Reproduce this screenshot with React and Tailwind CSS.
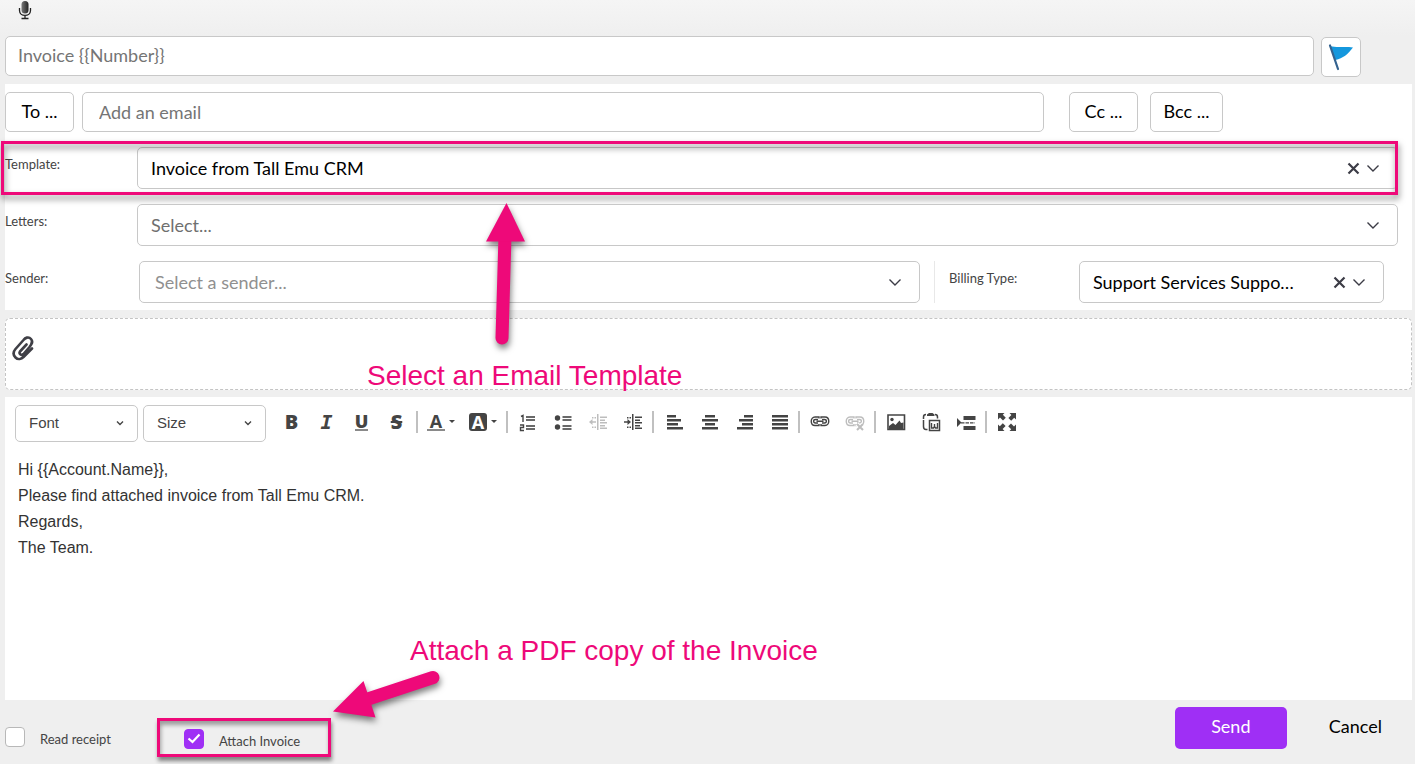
import { useState } from 'react';
import clsx from 'clsx';

const FIELD = 'rounded-[5px] border border-[#c8c8c8] bg-white';
const BODY_LINES = [
  'Hi {{Account.Name}},',
  'Please find attached invoice from Tall Emu CRM.',
  'Regards,',
  'The Team.',
];

export default function App() {
  const [template, setTemplate] = useState('Invoice from Tall Emu CRM');
  const [billing, setBilling] = useState('Support Services Support Plan');

  return (
    <main className="relative min-h-screen overflow-hidden bg-[#efefef] pl-[5px] pr-[3px] font-[Lato,sans-serif] text-lg text-black">
      {/* Dictation */}
      <div className="-ml-[5px] -mr-[3px] h-9 bg-linear-to-b from-[#f5f5f5] to-[#efefef] pl-4">
        <button type="button" aria-label="Dictate" className="block">
          <MicIcon />
        </button>
      </div>

      {/* Subject */}
      <div className="flex items-start gap-[7px] pr-[51px]">
        <input
          aria-label="Subject"
          defaultValue="Invoice {{Number}}"
          className={clsx(FIELD, 'h-10 min-w-0 flex-1 px-3 pb-[2px] text-[#757575]')}
        />
        <button type="button" aria-label="Flag" className={clsx(FIELD, 'mt-px flex size-10 items-center justify-center')}>
          <FlagIcon />
        </button>
      </div>

      <section className="mt-[7px] flex flex-col gap-[15px] bg-white pt-2 pb-[7px]">
        <div className="flex pr-[189px]">
          <button type="button" className={clsx(FIELD, 'h-10 w-[69px] pb-[2px]')}>To ...</button>
          <input
            aria-label="To"
            placeholder="Add an email"
            className={clsx(FIELD, 'ml-2 h-10 min-w-0 flex-1 px-4 placeholder:text-[#757575]')}
          />
          <button type="button" className={clsx(FIELD, 'ml-[25px] h-10 w-[69px] pb-[2px]')}>Cc ...</button>
          <button type="button" className={clsx(FIELD, 'ml-3 h-10 w-[73px] pb-[2px]')}>Bcc ...</button>
        </div>

        <div className="relative flex pr-[14px]">
          <FieldLabel htmlFor="template">Template:</FieldLabel>
          <SelectField id="template" value={template} onChange={setTemplate} placeholder="Select..." options={['Invoice from Tall Emu CRM']} clearable />
          <div className="pointer-events-none absolute -inset-y-[6px] -left-1 right-[14px] border-3 border-[#ee0979] drop-shadow-[1px_4px_3px_rgba(0,0,0,0.5)]" />
        </div>

        <div className="flex pr-[14px]">
          <FieldLabel htmlFor="letters">Letters:</FieldLabel>
          <SelectField id="letters" placeholder="Select..." options={[]} />
        </div>

        <div className="flex pr-7">
          <FieldLabel htmlFor="sender">Sender:</FieldLabel>
          <SelectField id="sender" placeholder="Select a sender..." options={[]} className="ml-[2px] pl-[2px] text-[#909090]" />
          <div className="ml-[14px] flex border-l border-[#e8e8e8] pl-[14px]">
            <FieldLabel htmlFor="billing" className="w-[130px]">Billing Type:</FieldLabel>
            <SelectField
              id="billing"
              value={billing}
              onChange={setBilling}
              placeholder="Select..."
              options={['Support Services Support Plan']}
              className="w-[305px] flex-none"
              clearable
            />
          </div>
        </div>
      </section>

      {/* Attachments */}
      <section className="mt-2 h-[72px] rounded-[5px] border border-dashed border-[#c4c4c4] bg-white pt-4 pl-[6px]">
        <button type="button" aria-label="Attach a file" className="block">
          <ClipIcon />
        </button>
      </section>

      {/* Message */}
      <section className="mt-[7px] min-h-[303px] bg-white font-['Liberation_Sans',Arial,sans-serif]">
        <Toolbar />
        <div
          role="textbox"
          aria-label="Message"
          contentEditable
          suppressContentEditableWarning
          className="mt-[15px] px-[13px] text-base leading-[26px] text-[#333] outline-none"
        >
          {BODY_LINES.map((line) => <p key={line}>{line}</p>)}
        </div>
      </section>

      <footer className="flex items-start pt-[7px] pr-[26px]">
        <div className="mt-5">
          <CheckField id="receipt" label="Read receipt" />
        </div>
        <div className="mt-[11px] ml-[46px] border-3 border-[#ee0979] pt-2 pr-7 pb-[5px] pl-6 shadow-[1px_4px_4px_rgba(0,0,0,0.45),inset_1px_4px_4px_rgba(0,0,0,0.35)]">
          <CheckField id="attach" label="Attach Invoice" defaultChecked />
        </div>
        <button type="button" className="ml-auto h-[42px] w-28 rounded-[5px] bg-[#9f2ff5] pb-1 text-white">Send</button>
        <button type="button" className="ml-[38px] h-[42px] px-1 pb-1">Cancel</button>
      </footer>

      {/* Callouts drawn over the form */}
      <svg className="pointer-events-none absolute top-0 left-0 drop-shadow-[1px_4px_3px_rgba(0,0,0,0.5)]" width="840" height="764" fill="#ee0979" stroke="#ee0979">
        <path d="M505 236L502 338" strokeWidth="13" strokeLinecap="round" />
        <path d="M506.5 203L525 241.500L486 241.500Z" stroke="none" />
        <path d="M368 699L433 677.500" strokeWidth="13" strokeLinecap="round" />
        <path d="M333 711.500L363.500 681L375.500 717.500Z" stroke="none" />
      </svg>
      <Callout className="top-[360px] left-[367px]">Select an Email Template</Callout>
      <Callout className="top-[635px] left-[410px]">Attach a PDF copy of the Invoice</Callout>
    </main>
  );
}

function Callout({ className, children }) {
  return (
    <p className={clsx("pointer-events-none absolute font-['Liberation_Sans',Arial,sans-serif] text-[28px] leading-8 whitespace-nowrap text-[#ee0979]", className)}>
      {children}
    </p>
  );
}

function FieldLabel({ htmlFor, className = 'w-[132px]', children }) {
  return (
    <label htmlFor={htmlFor} className={clsx('shrink-0 pt-2 text-[13px] leading-[18px] text-[#444]', className)}>
      {children}
    </label>
  );
}

function SelectField({ id, value = '', onChange = () => {}, placeholder, options, className, clearable }) {
  return (
    <div className={clsx(FIELD, 'relative flex h-[42px] min-w-0 flex-1 items-center', value ? 'text-black' : 'text-[#6f6f6f]', className)}>
      <select
        id={id}
        value={value}
        onChange={(e) => onChange(e.target.value)}
        className={clsx('h-full w-full appearance-none truncate bg-transparent pl-[13px] outline-none', clearable ? 'pr-[86px]' : 'pr-10')}
      >
        <option value="">{placeholder}</option>
        {options.map((o) => <option key={o}>{o}</option>)}
      </select>
      {clearable && (
        <button type="button" aria-label="Clear" onClick={() => onChange('')} className="absolute right-9 text-[#3c3c46]">
          <svg width="15" height="15" viewBox="0 0 15 15" fill="none" stroke="currentColor" strokeWidth="2.200">
            <path d="M2.500 2.500L12.500 12.500M12.500 2.500L2.500 12.500" />
          </svg>
        </button>
      )}
      <svg className="pointer-events-none absolute right-[17px] text-[#3c3c46]" width="14" height="14" viewBox="0 0 14 14" fill="none" stroke="currentColor" strokeWidth="1.400">
        <path d="M1.500 4.500L7 10L12.500 4.500" />
      </svg>
    </div>
  );
}

function CheckField({ id, label, defaultChecked }) {
  return (
    <div className="flex h-5 items-center gap-[15px]">
      <span className="relative flex size-5">
        <input
          id={id}
          type="checkbox"
          defaultChecked={defaultChecked}
          className="peer size-5 appearance-none rounded-[4px] border border-[#b8b8b8] bg-white checked:border-[#9f2ff5] checked:bg-[#9f2ff5]"
        />
        <svg className="pointer-events-none absolute inset-0 hidden peer-checked:block" width="20" height="20" fill="none" stroke="#fff" strokeWidth="2.200">
          <path d="M4.500 9.500L8.500 13L15.500 5.500" />
        </svg>
      </span>
      <label htmlFor={id} className="pt-1 text-[13px] leading-[18px] text-[#444]">{label}</label>
    </div>
  );
}

/* ---------- editor toolbar ---------- */

function Toolbar() {
  return (
    <div className="flex items-start pt-2 pl-[10px] text-[#444]">
      <ToolSelect label="Font" />
      <ToolSelect label="Size" className="ml-[5px]" />
      <div className="ml-2 flex items-center pt-px font-['Open_Sans',sans-serif]">
        <Tool label="Bold"><span className="text-xl font-extrabold">B</span></Tool>
        <Tool label="Italic"><span className="font-['DejaVu_Sans_Mono'] text-xl font-bold italic">I</span></Tool>
        <Tool label="Underline">
          <span className="border-b-2 border-[#8a8a8a] text-lg leading-4 font-extrabold">U</span>
        </Tool>
        <Tool label="Strikethrough"><span className="text-xl font-extrabold line-through decoration-2">S</span></Tool>
        <Divider />
        <Tool label="Text color" wide>
          <span className="w-[18px] border-b-2 border-[#8a8a8a] text-center text-lg leading-4 font-bold">A</span>
          <Caret />
        </Tool>
        <Tool label="Highlight color" wide>
          <span className="w-[18px] rounded-[3px] bg-[#444] text-center text-lg leading-[18px] font-bold text-white">A</span>
          <Caret />
        </Tool>
        <Divider />
        <Tool label="Numbered list">
          <Glyph>
            <path d="M2 3.500L4 2.500V9M1 12H4.500V14.500H1.500V17.500H5" fill="none" stroke="currentColor" strokeWidth="1.400" />
            <path d="M7 3h9v2H7zM7 6h9v2H7zM7 12h9v2H7zM7 15h9v2H7z" opacity=".8" />
          </Glyph>
        </Tool>
        <Tool label="Bulleted list">
          <Glyph>
            <circle cx="3.500" cy="5" r="2.700" />
            <circle cx="3.500" cy="14" r="2.700" />
            <path d="M8.500 3h9v2h-9zM8.500 6h9v2h-9zM8.500 12h9v2h-9zM8.500 15h9v2h-9z" opacity=".8" />
          </Glyph>
        </Tool>
        <Tool label="Decrease indent" disabled>
          <Glyph><IndentLines /><path d="M0 9l3.500-3v2.300H7v1.400H3.500V12z" /></Glyph>
        </Tool>
        <Tool label="Increase indent">
          <Glyph><IndentLines /><path d="M7 9L3.500 6v2.300H0v1.400h3.500V12z" /></Glyph>
        </Tool>
        <Divider />
        <Tool label="Align left"><Glyph><path d="M2 2h9v2.500H2zM2 6h14v2.500H2zM2 10h11v2.500H2zM2 14h16v2.500H2z" /></Glyph></Tool>
        <Tool label="Align center"><Glyph><path d="M5 2h10v2.500H5zM2 6h16v2.500H2zM5 10h10v2.500H5zM2 14h16v2.500H2z" /></Glyph></Tool>
        <Tool label="Align right"><Glyph><path d="M9 2h9v2.500H9zM4 6h14v2.500H4zM7 10h11v2.500H7zM2 14h16v2.500H2z" /></Glyph></Tool>
        <Tool label="Justify"><Glyph><path d="M2 2h16v2.500H2zM2 6h16v2.500H2zM2 10h16v2.500H2zM2 14h16v2.500H2z" /></Glyph></Tool>
        <Divider />
        <Tool label="Link"><Glyph><ChainLinks /></Glyph></Tool>
        <Tool label="Remove link" disabled>
          <Glyph><ChainLinks /><path d="M11 11l6 6M17 11l-6 6" stroke="#fff" strokeWidth="4" /><path d="M11 11l6 6M17 11l-6 6" stroke="currentColor" strokeWidth="2" /></Glyph>
        </Tool>
        <Divider />
        <Tool label="Image">
          <Glyph>
            <path d="M1 2H17.500V16.500H1Z" fill="none" stroke="currentColor" strokeWidth="1.600" />
            <circle cx="5" cy="6.500" r="1.700" />
            <path d="M2 16V13L6 10L8.500 12L12.500 7.500L14 10L16.500 9.500V16Z" />
          </Glyph>
        </Tool>
        <Tool label="Paste from Word">
          <Glyph>
            <path d="M4 1.500Q1.500 1.500 1.500 4V6M1.500 7V13.500Q1.500 16.500 4 16.500H5.500M13 1.500Q15.500 1.500 15.500 4V5.500" fill="none" stroke="currentColor" strokeWidth="1.500" />
            <path d="M5 3V1.500L7 0H10.500L12.500 1.500V3Z" />
            <path d="M7.500 7.500H17.500V17.500H7.500Z" fill="none" stroke="currentColor" strokeWidth="1.500" />
            <path d="M9.500 10V15H11.500L12.500 13.500L13.500 15H15.500V10M12.500 11V14" fill="none" stroke="currentColor" strokeWidth="1.400" />
          </Glyph>
        </Tool>
        <Tool label="Page break">
          <Glyph>
            <path d="M0 5L4.500 9.500L0 14ZM6.500 3h12v4H6.500zM6.500 13h12v4H6.500z" />
            <path d="M4 9.800H18" stroke="currentColor" strokeWidth="1.200" strokeDasharray="3.500 1" />
          </Glyph>
        </Tool>
        <Divider />
        <Tool label="Full screen">
          <Glyph>
            {[0, 90, 180, 270].map((angle) => (
              <path key={angle} d="M0 0H6.500L4.800 1.800L7.800 4.800L5 7.600L2 4.600L0 6.500Z" transform={`rotate(${angle} 9 9)`} />
            ))}
          </Glyph>
        </Tool>
      </div>
    </div>
  );
}

function ToolSelect({ label, className }) {
  return (
    <div className={clsx(FIELD, 'relative flex h-[37px] w-[123px] items-center', className)}>
      <select aria-label={label} className="h-full w-full appearance-none bg-transparent pb-px pl-[13px] text-[15px] outline-none">
        <option>{label}</option>
      </select>
      <svg className="pointer-events-none absolute right-[13px]" width="8" height="8" fill="none" stroke="currentColor" strokeWidth="1.400">
        <path d="M1 1.500L4 4.500L7 1.500" />
      </svg>
    </div>
  );
}

function Tool({ label, wide, disabled, children }) {
  return (
    <button
      type="button"
      aria-label={label}
      disabled={disabled}
      className={clsx('flex h-8 items-center justify-center', wide ? 'w-[42px] gap-1' : 'w-[35px]', disabled && 'opacity-35')}
    >
      {children}
    </button>
  );
}

function Divider() {
  return <span className="mx-[2px] h-[22px] w-[2px] bg-[#c0c0c0]" />;
}

function Caret() {
  return <svg width="6" height="4" fill="currentColor"><path d="M0 0H6L3 3Z" /></svg>;
}

function Glyph({ children }) {
  return <svg width="18" height="18" viewBox="0 0 18 18" fill="currentColor" className="overflow-visible">{children}</svg>;
}

function IndentLines() {
  return (
    <>
      <path d="M8 1h1.500v16H8zM11 3.500h7v1.500h-7zM11 6.500h5v1.500h-5zM11 9h7v1.500h-7zM11 12h5v1.500h-5zM11 14.500h7v1.500h-7z" />
      <path d="M3 4h1.500v1.500H3zM5.500 4H7v1.500H5.500zM3 13.500h1.500V15H3zM5.500 13.500H7V15H5.500z" />
    </>
  );
}

function ChainLinks() {
  return (
    <g fill="none" stroke="currentColor">
      <path d="M8 11V12.500H4C-1 12.500-1 4 4 4H8V5.500M10 5.500V4H14C19 4 19 12.500 14 12.500H10V11" strokeWidth="1.400" />
      <path d="M7 10H4.500C2 10 2 6.500 4.500 6.500H7M11 6.500H13.500C16 6.500 16 10 13.500 10H11M5.500 8.300H12.500" strokeWidth="1.400" />
    </g>
  );
}

/* ---------- form icons ---------- */

function MicIcon() {
  return (
    <svg width="18" height="20" viewBox="0 0 18 20" fill="none" stroke="#222" strokeWidth="1.300">
      <defs>
        <linearGradient id="mic">
          <stop offset="0" stopColor="#777" />
          <stop offset="1" stopColor="#222" />
        </linearGradient>
      </defs>
      <rect x="5.500" y="1" width="7" height="12.500" rx="3.500" fill="url(#mic)" stroke="none" />
      <path d="M3.500 8V10.500C3.500 17 14.500 17 14.500 10.500V8M9 15V18M5.500 18.500H12.500" />
    </svg>
  );
}

function FlagIcon() {
  return (
    <svg width="26" height="28" viewBox="0 0 26 28">
      <path d="M2 3C9 5 17 3 25 4.500C20 11 15 15.500 7.500 17Z" fill="#1497dd" />
      <path d="M2 2.500L10 26" stroke="#34628f" strokeWidth="2.200" strokeLinecap="round" />
    </svg>
  );
}

function ClipIcon() {
  return (
    <svg width="24" height="28" viewBox="0 0 24 28" fill="none" stroke="#3f3f46" strokeWidth="2.600" strokeLinecap="round" strokeLinejoin="round">
      <path d="M14.500 9.500L8 16.500C6.500 19 9.500 21 11.500 19L17.500 12C19.500 9.500 21.500 7 19 4C16.500 1 13 3 11.500 5L3.500 14C1 17 1 20 3.500 22.500C6 25 9.500 24 11.500 22L20 13.500" />
    </svg>
  );
}
